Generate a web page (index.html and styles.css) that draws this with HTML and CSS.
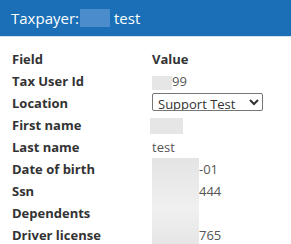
FILE: index.html
```html
<!DOCTYPE html>
<html lang="en">

<head>
    <meta charset="UTF-8" />
    <meta name="viewport" content="width=device-width, initial-scale=1.0" />
    <title>Taxpayer</title>
    <link rel="stylesheet" href="styles.css">
</head>

<body>
    <!-- 标题栏 -->
    <div class="header">
        <span>Taxpayer:</span><span class="mask-blue"></span><span>test</span>
    </div>

    <div class="details">
        <table>
            <tr>
                <th>Field</th>
                <th>Value</th>
            </tr>
            <tr>
                <th>Tax User Id</th>
                <td><span class="mask mask-id"></span>99</td>
            </tr>
            <tr>
                <th>Location</th>
                <td>
                    <select class="loc">
                        <option>Support Test</option>
                    </select>
                </td>
            </tr>
            <tr>
                <th>First name</th>
                <td><span class="mask mask-name"></span></td>
            </tr>
            <tr>
                <th>Last name</th>
                <td>test</td>
            </tr>
            <tr>
                <th>Date of birth</th>
                <td class="pad">-01</td>
            </tr>
            <tr>
                <th>Ssn</th>
                <td class="pad">444</td>
            </tr>
            <tr>
                <th>Dependents</th>
                <td></td>
            </tr>
            <tr>
                <th>Driver license</th>
                <td class="pad">765</td>
            </tr>
        </table>
        <!-- 遮挡的区域 -->
        <div class="mask-block"></div>
    </div>
</body>

</html>
```

FILE: styles.css
```css
* {
    margin: 0;
    padding: 0;
    box-sizing: border-box;
}

html,
body {
    height: 100%;
}

body {
    font-family: "Open Sans", "Liberation Sans", sans-serif;
    color: #333;
    background: #fff;
    overflow: hidden;
}

.header {
    height: 37px;
    background: #1a6fb6;
    border-bottom: 1px solid #cfe0f0;
    color: #fff;
    font-size: 15px;
    display: flex;
    align-items: center;
    padding-left: 11px;
}

.header .mask-blue {
    display: inline-block;
    width: 30px;
    height: 18px;
    background: #4a8ccc;
    margin: 0 4px 0 1px;
}

.details {
    position: relative;
    padding: 11px 0 0 12px;
}

.details table {
    border-collapse: collapse;
    font-size: 13px;
}

.details th,
.details td {
    height: 22px;
    padding: 0;
    text-align: left;
    vertical-align: middle;
    white-space: nowrap;
}

.details th {
    width: 140px;
    font-weight: bold;
    color: #333;
}

.details td {
    color: #555;
}

.details tr:first-child th:last-child {
    width: auto;
}

.mask {
    display: inline-block;
    background: #e6e6e6;
    vertical-align: middle;
}

.mask-id {
    width: 20px;
    height: 14px;
}

.mask-name {
    width: 33px;
    height: 16px;
    margin-left: -2px;
}

.pad {
    padding-left: 47px !important;
}

.loc {
    width: 111px;
    height: 18px;
    font: 13px "Open Sans", "Liberation Sans", sans-serif;
    color: #333;
    border: 1px solid #767676;
    border-radius: 2px;
    background: #fff;
    padding-left: 1px;
}

.mask-block {
    position: absolute;
    left: 152px;
    top: 121px;
    width: 47px;
    height: 86px;
    background: linear-gradient(#e4e4e4, #f0f0f0 60%, #e6e6e6);
}
```
